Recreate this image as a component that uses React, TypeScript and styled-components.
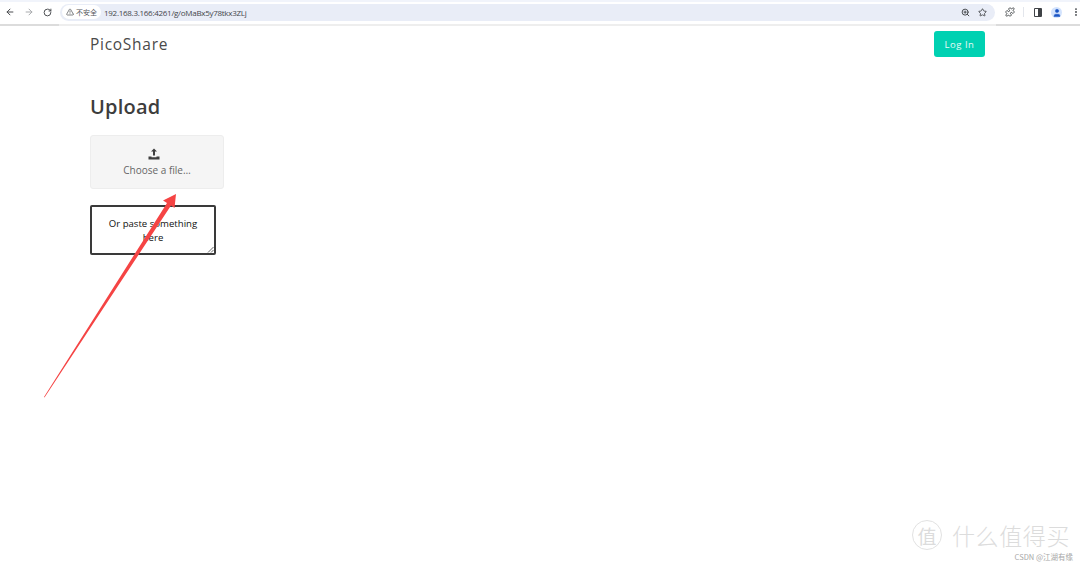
import { createGlobalStyle, styled } from 'styled-components'
import { ArrowLeft, ArrowRight, RotateCw, TriangleAlert, ZoomIn, Star, Puzzle, EllipsisVertical, User } from 'lucide-react'

const GlobalStyle = createGlobalStyle`
	html, body {
		margin: 0;
		padding: 0;
		background: #fff;
		font-family: 'Open Sans', 'Noto Sans', sans-serif;
		overflow: hidden;
	}
`

const Page = styled.div`
	position: relative;
	width: 1080px;
	height: 565px;
	overflow: hidden;
`
const BrowserBar = styled.div`
	display: flex;
	align-items: center;
	height: 24px;
	background: linear-gradient(#f1f4fb 0 2px, #fff 2px);
	border-bottom: 2px solid #ececec;
	border-image: linear-gradient(90deg, #dcdcdc 0 60px, #eeeeee 60px 995px, #dcdcdc 995px) 1;
	box-sizing: content-box;
`
const NavButton = styled.span<{ $dim?: boolean }>`
	display: flex;
	flex-shrink: 0;
	align-items: center;
	justify-content: center;
	width: 19px;
	color: ${p => (p.$dim ? '#a9abae' : '#4a4c50')};
`
const AddressBar = styled.div`
	display: flex;
	flex-shrink: 0;
	align-items: center;
	width: 935px;
	height: 17px;
	margin-left: 3px;
	border-radius: 9px;
	background: #e9edf7;
	box-sizing: border-box;
	padding: 0 3px 0 2px;
`
const SecurityChip = styled.span`
	display: flex;
	align-items: center;
	gap: 2px;
	height: 14px;
	padding: 0 4px;
	border-radius: 7px;
	background: #fff;
	color: #55585c;
	font-family: 'Noto Sans CJK SC', sans-serif;
	font-size: 7px;
`
const Url = styled.span`
	margin-left: 3px;
	flex: 1;
	color: #44474b;
	font-family: 'Open Sans', sans-serif;
	font-size: 8px;
	letter-spacing: -0.28px;
`
const AddressIcons = styled.span`
	display: flex;
	align-items: center;
	gap: 8px;
	padding-right: 5px;
	color: #45484c;
`
const BarTools = styled.div`
	display: flex;
	align-items: center;
	margin-left: 5px;
	color: #45484c;
`
const ToolSlot = styled.span`
	display: flex;
	flex-shrink: 0;
	align-items: center;
	justify-content: center;
	width: 19px;
`
const Separator = styled.span`
	width: 1px;
	height: 10px;
	margin: 0 4px;
	background: #e3e6ec;
`
const SidePanelIcon = styled.span`
	display: block;
	width: 3px;
	height: 7px;
	border: 1px solid #3f4246;
	border-right-width: 4px;
	border-radius: 1px;
	box-sizing: content-box;
`
const Avatar = styled.span`
	display: flex;
	align-items: flex-end;
	justify-content: center;
	width: 11px;
	height: 11px;
	border-radius: 50%;
	background: #d3e3fd;
	color: #1a56c4;
	overflow: hidden;
`
const Content = styled.main`
	width: 895px;
	margin-left: 90px;
`
const Nav = styled.nav`
	display: flex;
	align-items: center;
	justify-content: space-between;
	padding-top: 5px;
`
const Brand = styled.span`
	color: #4a4a4a;
	font-size: 15.5px;
	letter-spacing: 0.72px;
	line-height: 26px;
`
const LoginButton = styled.button`
	width: 51px;
	height: 26px;
	padding: 0;
	border: 0;
	border-radius: 3px;
	background: #00d1b2;
	color: #e6faf7;
	font-family: inherit;
	font-size: 9.5px;
	letter-spacing: 0.5px;
`
const Title = styled.h1`
	margin: 36px 0 0;
	color: #3d3d3d;
	font-size: 20px;
	font-weight: 600;
	line-height: 28px;
	letter-spacing: 0.2px;
`
const FileDrop = styled.label`
	display: flex;
	flex-direction: column;
	align-items: center;
	justify-content: center;
	gap: 4px;
	width: 134px;
	height: 54px;
	margin-top: 14px;
	box-sizing: border-box;
	border: 1px solid #ededed;
	border-radius: 3px;
	background: #f5f5f5;
	color: #666;
	font-size: 10px;
	line-height: 13px;
`
const UploadIcon = styled.svg`
	margin-left: -6px;
`
const PasteBox = styled.div`
	position: relative;
	display: flex;
	align-items: center;
	justify-content: center;
	width: 126px;
	height: 50px;
	margin-top: 16px;
	box-sizing: border-box;
	padding: 2px 12px 0;
	border: 2px solid #3a3a3a;
	border-radius: 2px;
	color: #111;
	font-size: 9.6px;
	line-height: 14px;
	text-align: center;
`
const ResizeGrip = styled.svg`
	position: absolute;
	right: 0;
	bottom: 0;
`
const ArrowOverlay = styled.svg`
	position: absolute;
	left: 0;
	top: 0;
	pointer-events: none;
`
const Watermark = styled.div`
	position: absolute;
	right: 7px;
	bottom: 4px;
	display: flex;
	flex-direction: column;
	align-items: flex-end;
	gap: 2px;
	color: #dcdcdc;
	font-family: 'Noto Sans CJK SC', sans-serif;
`
const WatermarkLogo = styled.div`
	display: flex;
	align-items: center;
	gap: 10px;
	padding-right: 3px;
`
const WatermarkBadge = styled.span`
	display: flex;
	align-items: center;
	justify-content: center;
	width: 28px;
	height: 28px;
	border: 1px solid #e2e2e2;
	border-radius: 50%;
	font-size: 19px;
`
const WatermarkName = styled.span`
	font-size: 23px;
	line-height: 25px;
	letter-spacing: 0.6px;
	font-weight: 300;
`
const WatermarkCredit = styled.span`
	color: #a8a8a8;
	font-size: 7.5px;
	line-height: 9px;
`

export default function App() {
	return (
		<Page>
			<GlobalStyle />
			<BrowserBar>
				<NavButton><ArrowLeft size={10} strokeWidth={2.4} /></NavButton>
				<NavButton $dim><ArrowRight size={10} strokeWidth={2.4} /></NavButton>
				<NavButton><RotateCw size={9} strokeWidth={2.6} /></NavButton>
				<AddressBar>
					<SecurityChip>
						<TriangleAlert size={8} strokeWidth={2.2} />
						不安全
					</SecurityChip>
					<Url>192.168.3.166:4261/g/oMaBx5y78tkx3ZLj</Url>
					<AddressIcons>
						<ZoomIn size={9} strokeWidth={2.6} />
						<Star size={9} strokeWidth={2.4} />
					</AddressIcons>
				</AddressBar>
				<BarTools>
					<ToolSlot><Puzzle size={10} strokeWidth={2.2} /></ToolSlot>
					<Separator />
					<ToolSlot><SidePanelIcon /></ToolSlot>
					<ToolSlot><Avatar><User size={10} fill="currentColor" strokeWidth={1} /></Avatar></ToolSlot>
					<ToolSlot><EllipsisVertical size={10} strokeWidth={2.6} /></ToolSlot>
				</BarTools>
			</BrowserBar>

			<Content>
				<Nav>
					<Brand>PicoShare</Brand>
					<LoginButton>Log In</LoginButton>
				</Nav>
				<Title>Upload</Title>
				<FileDrop>
					<UploadIcon width="12" height="12" viewBox="0 0 12 12" fill="#3f3f3f">
						<path d="M6 .5 9 3.5H7V7.5H5V3.5H3Z" />
						<path d="M.5 8.5H3.5V9.3H8.5V8.5H11.5V11.5H.5Z" />
					</UploadIcon>
					Choose a file…
				</FileDrop>
				<PasteBox>
					Or paste something here
					<ResizeGrip width="7" height="7" viewBox="0 0 7 7" stroke="#666" strokeWidth="1">
						<path d="M1 6.5 6.5 1M4 6.5 6.5 4" />
					</ResizeGrip>
				</PasteBox>
			</Content>

			<ArrowOverlay width="1080" height="565" viewBox="0 0 1080 565">
				<path d="M44 397 L167 203 L163 200.5 L176 194 L174.5 208 L171 205.5 L44.5 397.5 Z" fill="#f54444" />
			</ArrowOverlay>

			<Watermark>
				<WatermarkLogo>
					<WatermarkBadge>值</WatermarkBadge>
					<WatermarkName>什么值得买</WatermarkName>
				</WatermarkLogo>
				<WatermarkCredit>CSDN @江湖有缘</WatermarkCredit>
			</Watermark>
		</Page>
	)
}
